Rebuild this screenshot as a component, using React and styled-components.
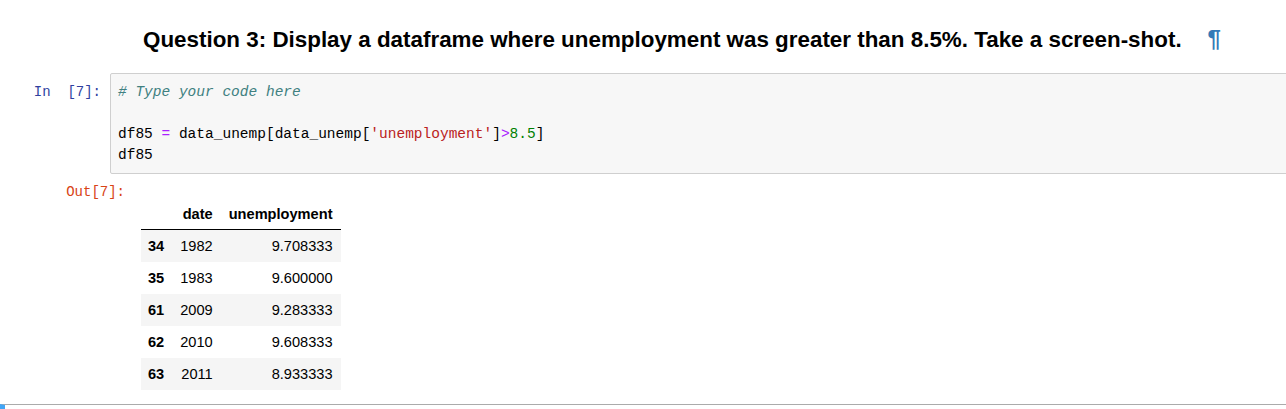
import React from "react";
import styled, { createGlobalStyle } from "styled-components";

const GlobalStyle = createGlobalStyle`
  html, body { margin: 0; padding: 0; background: #fff; overflow: hidden; }
  body { font-family: "Liberation Sans", Arial, sans-serif; }
`;

const Notebook = styled.div`
  display: flex;
  flex-direction: column;
  width: 1286px;
  height: 409px;
`;

const MarkdownCell = styled.div`
  display: flex;
  align-items: baseline;
  padding: 25px 0 0 143px;
  height: 48px;
`;

const Heading = styled.h3`
  margin: 0;
  font-family: "Liberation Sans", Arial, sans-serif;
  font-weight: 700;
  font-size: 22.4px;
  line-height: 27px;
  color: #000;
  white-space: nowrap;
`;

const Anchor = styled.span`
  margin-left: 26px;
  color: #337ab7;
  font-weight: 700;
  font-size: 24px;
`;

const CellRow = styled.div`
  display: flex;
  align-items: flex-start;
`;

const Prompt = styled.div`
  flex: 0 0 ${(p) => p.$width}px;
  box-sizing: border-box;
  padding: ${(p) => p.$top}px ${(p) => p.$right}px 0 0;
  text-align: right;
  font-family: "Liberation Mono", "DejaVu Sans Mono", monospace;
  font-size: 14px;
  line-height: 21px;
  white-space: pre;
  color: ${(p) => p.$color};
`;

const InputArea = styled.pre`
  flex: 1;
  margin: 0 -4px 0 0;
  box-sizing: border-box;
  height: 101px;
  padding: 8px 7px;
  background: #f7f7f7;
  border: 1px solid #cfcfcf;
  border-radius: 2px;
  font-family: "Liberation Mono", "DejaVu Sans Mono", monospace;
  font-size: 14.5px;
  line-height: 21px;
  color: #000;
`;

const Tok = styled.span`
  color: ${(p) => p.$c};
  font-style: ${(p) => (p.$i ? "italic" : "normal")};
`;

const OutputRow = styled(CellRow)`
  padding-top: 8px;
`;

const OutputArea = styled.div`
  padding-top: 16px;
`;

const Table = styled.table`
  border-collapse: collapse;
  border-spacing: 0;
  font-family: "Liberation Sans", Arial, sans-serif;
  font-size: 14.6px;
  color: #000;
`;

const HeadCell = styled.th`
  height: 31px;
  padding: 0 8px;
  text-align: right;
  font-weight: 700;
  border-bottom: 1px solid #000;
  vertical-align: middle;
`;

const Row = styled.tr`
  background: ${(p) => (p.$alt ? "#f5f5f5" : "#fff")};
`;

const IndexCell = styled.th`
  height: 32px;
  padding: 0 8px 0 7px;
  text-align: left;
  font-weight: 700;
`;

const Cell = styled.td`
  height: 32px;
  padding: 0 8px;
  text-align: right;
`;

const Spacer = styled.div`
  flex: 1;
`;

const NextCell = styled.div`
  height: 4px;
  border-top: 1px solid #ababab;
  border-left: 5px solid #42a5f5;
  margin-right: -4px;
`;

const rows = [
  ["34", "1982", "9.708333"],
  ["35", "1983", "9.600000"],
  ["61", "2009", "9.283333"],
  ["62", "2010", "9.608333"],
  ["63", "2011", "8.933333"],
];

export default function App() {
  return (
    <>
      <GlobalStyle />
      <Notebook>
        <MarkdownCell>
          <Heading>
            Question 3: Display a dataframe where unemployment was greater than 8.5%. Take a screen-shot.
            <Anchor>¶</Anchor>
          </Heading>
        </MarkdownCell>
        <CellRow>
          <Prompt $width={110} $top={9} $right={9} $color="#303f9f">{"In  [7]:"}</Prompt>
          <InputArea>
            <Tok $c="#408080" $i># Type your code here</Tok>
            {"\n\n"}
            {"df85 "}
            <Tok $c="#aa22ff">=</Tok>
            {" data_unemp[data_unemp["}
            <Tok $c="#ba2121">'unemployment'</Tok>
            {"]"}
            <Tok $c="#aa22ff">&gt;</Tok>
            <Tok $c="#008000">8.5</Tok>
            {"]\ndf85"}
          </InputArea>
        </CellRow>
        <OutputRow>
          <Prompt $width={141} $top={0} $right={16} $color="#d84315">{"Out[7]:"}</Prompt>
          <OutputArea>
            <Table>
              <thead>
                <tr>
                  <HeadCell />
                  <HeadCell>date</HeadCell>
                  <HeadCell>unemployment</HeadCell>
                </tr>
              </thead>
              <tbody>
                {rows.map((r, i) => (
                  <Row key={r[0]} $alt={i % 2 === 0}>
                    <IndexCell>{r[0]}</IndexCell>
                    <Cell>{r[1]}</Cell>
                    <Cell>{r[2]}</Cell>
                  </Row>
                ))}
              </tbody>
            </Table>
          </OutputArea>
        </OutputRow>
        <Spacer />
        <NextCell />
      </Notebook>
    </>
  );
}
